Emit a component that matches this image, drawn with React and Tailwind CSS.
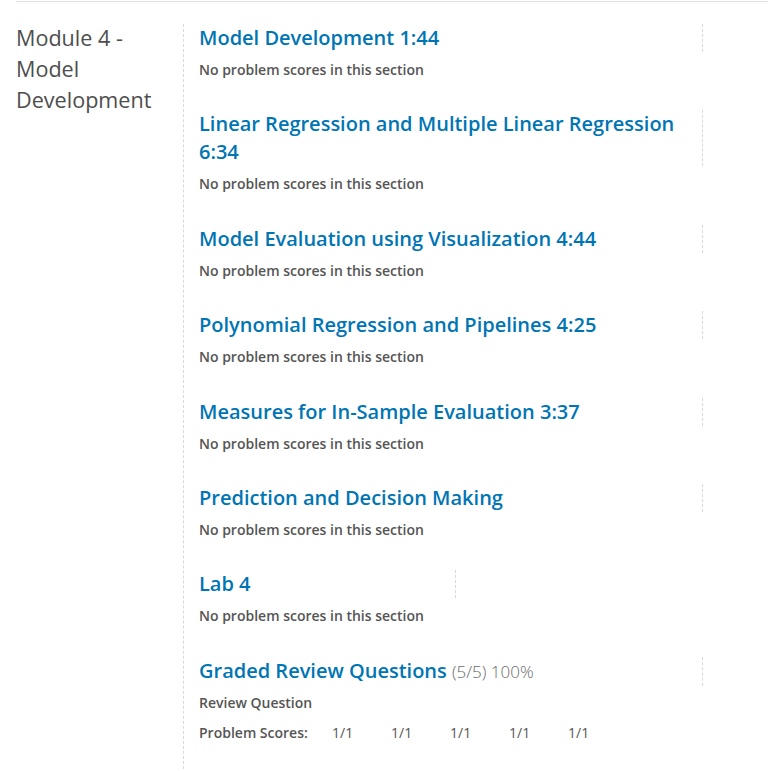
import React from 'react';

const sections = [
  { title: 'Model Development 1:44' },
  { title: 'Linear Regression and Multiple Linear Regression 6:34' },
  { title: 'Model Evaluation using Visualization 4:44' },
  { title: 'Polynomial Regression and Pipelines 4:25' },
  { title: 'Measures for In-Sample Evaluation 3:37' },
  { title: 'Prediction and Decision Making' },
  { title: 'Lab 4', narrow: true },
];

const scores = ['1/1', '1/1', '1/1', '1/1', '1/1'];

function Section({ title, narrow, children }) {
  return (
    <div className="mb-[30.4px]">
      <h3
        className={`text-[20px] leading-[28px] font-semibold text-[#0075b4] border-r border-dashed border-[#d9d9d9] pr-6 ${narrow ? 'w-[257px]' : 'w-[504px]'}`}
      >
        {title}
      </h3>
      <div className="mt-2">{children}</div>
    </div>
  );
}

export default function App() {
  return (
    <div className="min-h-[771px] bg-white font-['Open_Sans',sans-serif] text-[#414141]">
      <div className="ml-4 border-t border-[#e2e2e2] mt-px pt-[22px] flex">
        <div className="w-[167px] flex-shrink-0">
          <h2 className="-mt-[2px] text-[21.6px] leading-[31px] font-normal text-[#4e4e4e] pr-2">
            Module 4 - Model Development
          </h2>
        </div>
        <div className="border-l border-dashed border-[#d9d9d9] pl-[15px] min-h-[750px]">
          {sections.map(s => (
            <Section key={s.title} title={s.title} narrow={s.narrow}>
              <p className="text-[14px] leading-5 font-semibold text-[#555]">No problem scores in this section</p>
            </Section>
          ))}
          <div>
            <h3 className="text-[20px] leading-[28px] font-semibold text-[#0075b4] border-r border-dashed border-[#d9d9d9] w-[504px]">
              Graded Review Questions{' '}
              <span className="text-[17px] font-light text-[#6b6b6b]">(5/5) 100%</span>
            </h3>
            <p className="mt-[7px] text-[14px] leading-5 font-semibold text-[#555]">Review Question</p>
            <div className="mt-[10px] flex items-center text-[14px] leading-5">
              <span className="font-semibold text-[#555] w-[133px]">Problem Scores:</span>
              <div className="flex">
                {scores.map((s, i) => (
                  <span key={i} className="w-[59px] text-[#555]">{s}</span>
                ))}
              </div>
            </div>
          </div>
        </div>
      </div>
    </div>
  );
}
